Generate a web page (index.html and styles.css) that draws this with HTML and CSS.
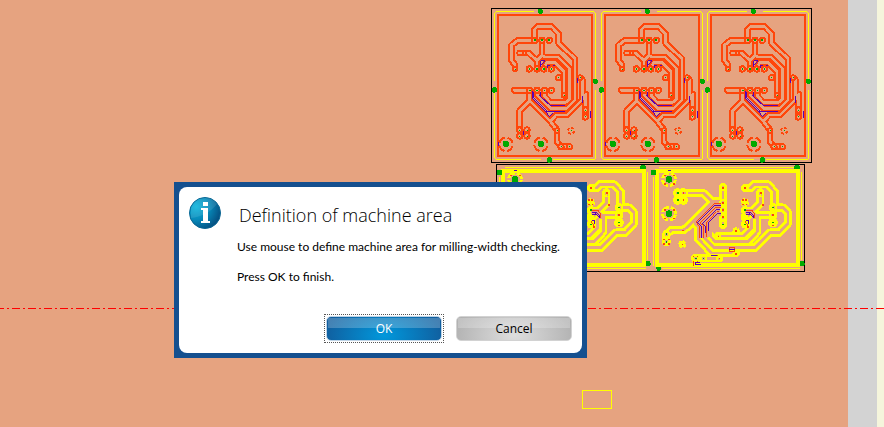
FILE: index.html
```
<!DOCTYPE html>
<html lang="en">
<head>
<meta charset="utf-8">
<title>Definition of machine area</title>
<link rel="stylesheet" href="styles.css">
</head>
<body>
<main class="workspace">
  <div class="bed"></div>
  <div class="rail"></div>
  <div class="edge"></div>
  <svg class="layout" width="884" height="427" aria-hidden="true" shape-rendering="crispEdges">
    <defs>
      <g id="red-traces">
        <path d="M84 207V195L73 180V136L91 122H143V88L151 80H194L215 102V130L264 176V300L238 326H192L150 284V271"/>
        <path d="M165 121V165L172 171H213L247 205V298L236 307H190L172 288V271"/>
        <path d="M98 159H125L150 182V207M165 165L150 182"/>
        <path d="M231 286V215L205 188H178L170 207"/>
        <path d="M82 271H128V302L98 332V390M128 302L190 364L210 390V425L222 440H244"/>
        <path d="M192 362L207 345H240L286 299V240L279 233M296 283V350"/>
      </g>
      <g id="red-pads">
        <circle cx="143" cy="121" r="8"/><circle cx="165" cy="121" r="8"/><circle cx="187" cy="121" r="8"/>
        <circle cx="112" cy="159" r="5"/><circle cx="84" cy="207" r="7"/>
        <circle cx="127" cy="207" r="8"/><circle cx="150" cy="207" r="8"/><circle cx="170" cy="207" r="8"/><circle cx="193" cy="207" r="8"/>
        <circle cx="128" cy="271" r="8"/><circle cx="150" cy="271" r="8"/><circle cx="172" cy="271" r="8"/><circle cx="193" cy="271" r="8"/>
        <circle cx="215" cy="233" r="8"/><circle cx="279" cy="233" r="7"/><circle cx="231" cy="286" r="7"/>
        <circle cx="295" cy="330" r="8"/><circle cx="295" cy="351" r="8"/>
        <circle cx="98" cy="390" r="8"/><circle cx="120" cy="390" r="8"/><circle cx="98" cy="408" r="8"/><circle cx="120" cy="408" r="8"/>
        <circle cx="210" cy="392" r="7"/><circle cx="222" cy="440" r="8"/><circle cx="247" cy="440" r="8"/>
      </g>
      <g id="red-board">
        <path class="thin" d="M140 35H28L23 40V243M23 278V474L28 479H163M197 479H321L326 474V270M326 236V40L321 35H190"/>
        <rect class="red-line" x="33" y="45" width="282" height="423"/>
        <use href="#red-traces" class="red-outer"/>
        <use href="#red-traces" class="red-inner"/>
        <use href="#red-pads" class="red-pad"/>
        <g class="red-ring">
          <circle cx="57" cy="433" r="20" stroke-dasharray="24 7.4" stroke-dashoffset="-4"/>
          <circle cx="162" cy="433" r="20" stroke-dasharray="24 7.4" stroke-dashoffset="-4"/>
          <circle cx="252" cy="392" r="9" stroke-dasharray="9 5"/>
        </g>
        <path class="purple" d="M161 200V182H174M163 196L172 184M181 203V197H190M197 197H205M137 274V297L181 341M141 276V294L184 337M161 276V290L190 317H235M157 285L183 310M178 335H235M180 342L187 350L199 338M271 235V250M286 289V308M311 333V355M109 394V405M36 427V439"/>
        <g class="green">
          <circle cx="160" cy="34" r="8"/><circle cx="325" cy="244" r="8"/><circle cx="22" cy="270" r="8"/><circle cx="187" cy="480" r="8"/>
          <circle cx="57" cy="432" r="10"/><circle cx="162" cy="432" r="10"/>
          <path d="M141 118h6v6h-6zM162 118h6v6h-6zM184 118h6v6h-6zM125 205h5v5h-5zM148 205h5v5h-5zM168 205h5v5h-5zM191 205h5v5h-5zM126 269h5v5h-5zM148 269h5v5h-5zM170 269h5v5h-5zM191 269h5v5h-5zM83 206h3v3h-3zM214 232h3v3h-3zM278 232h3v3h-3zM230 285h3v3h-3zM294 329h3v3h-3zM294 349h3v3h-3zM97 389h3v3h-3zM119 389h3v3h-3zM97 407h3v3h-3zM119 407h3v3h-3zM209 391h3v3h-3zM221 438h4v4h-4zM245 438h4v4h-4zM251 391h3v3h-3z"/>
        </g>
      </g>
      <g id="yellow-traces">
        <path d="M315 84H332L342 73H383L404 95V143H430L444 158V190L418 218H390L345 263H222L186 227V205"/>
        <path d="M399 165H352V215L325 245H225L203 218V200"/>
        <path d="M361 97V130L335 154H315"/>
        <path d="M235 228H310L335 205V178"/>
        <path d="M249 82V193"/>
        <path d="M113 99H190L215 124H249M215 128L140 203L130 210H95L79 223V245"/>
        <path d="M165 190L174 200V236L215 279H288"/>
        <path d="M165 295H238"/>
      </g>
      <g id="yellow-pads">
        <circle cx="113" cy="99" r="11"/><circle cx="130" cy="99" r="11"/><circle cx="113" cy="120" r="11"/><circle cx="130" cy="120" r="11"/>
        <circle cx="249" cy="82" r="8"/><circle cx="249" cy="128" r="9"/><circle cx="249" cy="150" r="9"/><circle cx="249" cy="172" r="9"/><circle cx="249" cy="193" r="10"/>
        <circle cx="315" cy="84" r="8"/><circle cx="315" cy="127" r="9" stroke-dasharray="5 4"/><circle cx="315" cy="150" r="8"/><circle cx="313" cy="172" r="8"/><circle cx="315" cy="193" r="9"/>
        <circle cx="361" cy="99" r="8" stroke-dasharray="6 3"/><circle cx="399" cy="143" r="10"/><circle cx="399" cy="165" r="10"/><circle cx="399" cy="188" r="11"/>
        <circle cx="79" cy="223" r="9"/><circle cx="79" cy="245" r="10"/><circle cx="127" cy="253" r="9" stroke-dasharray="10 4"/>
        <circle cx="288" cy="213" r="8" stroke-dasharray="10 4"/><circle cx="235" cy="228" r="6"/><circle cx="288" cy="281" r="7"/>
        <circle cx="166" cy="295" r="9" stroke-dasharray="5 3"/><circle cx="190" cy="295" r="9"/><circle cx="238" cy="296" r="7"/>
      </g>
      <g id="yellow-board">
        <path class="thin" d="M58 22H465M40 50V319M484 36V300M65 325H479"/>
        <rect class="yellow-frame" x="51" y="33" width="424" height="282"/>
        <use href="#yellow-traces" class="yellow-outer"/>
        <use href="#yellow-pads" class="yellow-pad-fill"/>
        <use href="#yellow-traces" class="yellow-inner"/>
        <use href="#yellow-pads" class="yellow-pad"/>
        <g class="yellow-ring">
          <circle cx="87" cy="58" r="19" stroke-dasharray="24 5.8" stroke-dashoffset="-3"/>
          <circle cx="87" cy="161" r="19" stroke-dasharray="24 5.8" stroke-dashoffset="-3"/>
        </g>
        <path class="bed-line" d="M244 136H224L172 187L184 198V235M240 150H228L196 184V235M242 162H230L208 188V232M316 154H334L342 164V178"/>
        <path class="red-thin" d="M243 132H221L168 187L179 199V235M243 143H226L180 189L190 196V235M238 155H230L200 187V230M316 151H336L344 162V174M268 264H284V276H268ZM214 286H234M315 184L326 200M162 306V317"/>
        <path class="purple" d="M243 138H223L173 188L185 200V233M240 149H230L187 191L196 198V220M242 161H231L206 187V212M318 157H332L340 165V174M325 158L337 170M318 165H330M319 183H326V192M268 270H284M214 287H232M183 313H166V307H180M84 32H92"/>
        <path class="red-dots" d="M110 96h5v5h-5zM128 96h5v5h-5zM110 117h5v5h-5zM128 117h5v5h-5zM246 82h6v5h-6zM247 127h5v5h-5zM247 148h5v5h-5zM247 169h5v5h-5zM312 82h5v5h-5zM307 118h4v4h-4zM316 118h4v4h-4zM307 132h4v4h-4zM317 132h4v4h-4zM360 96h5v5h-5zM367 133h4v4h-4zM397 162h5v5h-5zM397 195h4v4h-4zM127 209h4v4h-4zM70 236h4v4h-4zM85 236h4v4h-4zM70 250h4v4h-4zM85 250h4v4h-4zM126 251h4v4h-4zM286 211h4v4h-4zM234 227h4v4h-4zM286 280h4v4h-4zM236 294h4v4h-4zM158 288h4v4h-4zM170 288h4v4h-4zM158 302h4v4h-4zM170 302h4v4h-4zM322 198h5v5h-5zM73 44h4v4h-4zM100 44h4v4h-4zM73 70h4v4h-4zM100 70h4v4h-4zM73 148h4v4h-4zM100 148h4v4h-4zM73 174h4v4h-4zM100 174h4v4h-4z"/>
        <g class="green">
          <path d="M33 30h14v14h-14zM464 15h14l2 12h-18zM481 303h11l3 12-4 3h-11zM48 321h15v8l-4 4h-8z"/>
          <circle cx="87" cy="58" r="10"/><circle cx="87" cy="161" r="10"/>
          <path d="M111 97h5v5h-5zM111 118h5v5h-5zM247 191h5v5h-5zM397 140h5v5h-5zM397 185h5v5h-5zM77 220h5v5h-5zM77 243h5v5h-5zM312 148h5v5h-5zM312 191h5v5h-5zM188 293h5v5h-5zM166 293h4v4h-4z"/>
        </g>
      </g>
    </defs>
    <path class="panel" d="M491.500 8.500H811.500V162.500H491.500ZM496.500 164.500H804.500V271.500H496.500Z"/>
    <g id="lower-boards">
      <use href="#yellow-board" transform="translate(486 160) scale(.33333)"/>
      <use href="#yellow-board" transform="translate(640 160) scale(.33333)"/>
    </g>
    <g id="upper-boards">
      <use href="#red-board" transform="translate(487 0) scale(.33333)"/>
      <use href="#red-board" transform="translate(594 0) scale(.33333)"/>
      <use href="#red-board" transform="translate(700 0) scale(.33333)"/>
    </g>
    <path class="axis" d="M0 308.500H884"/>
    <rect class="marker" x="582.500" y="390.500" width="29" height="18"/>
  </svg>

  <section class="dialog" role="dialog" aria-labelledby="dialog-title">
    <svg class="info" viewBox="0 0 32 32" aria-hidden="true">
      <defs>
        <radialGradient id="ball" cx=".22" cy=".3" r=".85">
          <stop offset="0" stop-color="#0cb4dc"/><stop offset=".5" stop-color="#0788b8"/><stop offset="1" stop-color="#054a7c"/>
        </radialGradient>
      </defs>
      <circle cx="16" cy="16" r="15.500" fill="url(#ball)" stroke="#0a6794"/>
      <path d="M2 21C12 20 22 15 28 7A15 15 0 0 0 2 11Z" fill="#fff" opacity=".1"/>
      <path d="M14 5h5v4h-5zM12 11h7v13h2v2h-9v-2h2v-11h-2z" fill="#fff"/>
    </svg>
    <div class="content">
      <h1 class="title" id="dialog-title">Definition of machine area</h1>
      <p class="message">Use mouse to define machine area for milling-width checking.</p>
      <p class="message">Press OK to finish.</p>
    </div>
    <div class="actions">
      <button class="button primary" type="button">OK</button>
      <button class="button" type="button">Cancel</button>
    </div>
  </section>
</main>
</body>
</html>
```
FILE: styles.css
```
* { box-sizing: border-box; }
body { margin: 0; font-family: "Open Sans", "Noto Sans", sans-serif; font-size: 12px; color: #000; }
.workspace { position: relative; display: flex; min-height: 100vh; overflow: hidden; }
.bed { flex: 1; background: #e6a380; }
.rail { width: 29px; background: #d3d3d3; }
.edge { width: 7px; background: #f5f5dc; }
.layout { position: absolute; left: 0; top: 0; fill: none; }

.panel { stroke: #000; }
.axis { stroke: #f00; stroke-dasharray: 8 3 2 3; stroke-dashoffset: 4; }
.marker, .thin { stroke: #ff0; }
.thin { stroke-width: 3; }
.red-line { stroke: #ff460a; stroke-width: 6; }
.red-outer { stroke: #ff460a; stroke-width: 20; stroke-linejoin: round; stroke-linecap: round; }
.red-inner { stroke: #e6a380; stroke-width: 8; stroke-linejoin: round; stroke-linecap: round; }
.red-pad { stroke: #ff460a; stroke-width: 6; fill: #e6a380; }
.red-ring { stroke: #ff460a; stroke-width: 6; }
.purple { stroke: #5a00b4; stroke-width: 3; }
.green { fill: #00aa00; }
.yellow-frame { stroke: #ff0; stroke-width: 12; }
.yellow-outer { stroke: #ff0; stroke-width: 25; stroke-linejoin: round; stroke-linecap: round; }
.yellow-inner { stroke: #e6a380; stroke-width: 8; stroke-linejoin: round; stroke-linecap: round; }
.yellow-pad-fill { fill: #ff0; }
.yellow-pad { stroke: #ff0; stroke-width: 7; }
.yellow-ring { stroke: #ff0; stroke-width: 9; }
.bed-line { stroke: #e6a380; stroke-width: 14; }
.red-thin { stroke: #ff460a; stroke-width: 3; }
.red-dots { fill: #ff460a; }

.dialog {
  position: absolute; left: 174px; top: 182px;
  display: grid; grid-template-columns: 32px minmax(0, 1fr); column-gap: 16px;
  width: 413px; min-height: 176px; padding: 15px 15px 17px;
  background: #15508f;
  isolation: isolate;
}
.dialog::before { content: ""; position: absolute; inset: 5px; z-index: -1; border-radius: 8px; background: #fff; }
.info { width: 32px; height: 32px; }
.title { margin: 4px 0 10px 2px; font-size: 18px; line-height: 28px; font-weight: 300; white-space: nowrap; }
.message { margin: 0 0 14px; font-family: Lato, "Open Sans", sans-serif; line-height: 16px; white-space: nowrap; }
.actions { grid-column: 1 / -1; display: flex; align-self: end; justify-content: flex-end; gap: 14px; }
.button {
  position: relative;
  width: 116px; height: 25px; padding: 0;
  border: 1px solid #d2d2d2; border-radius: 5px;
  font: inherit; color: #000;
  background:
    linear-gradient(rgba(255,255,255,.22), rgba(255,255,255,.22)) 1px 1px / 112px 10px no-repeat,
    radial-gradient(ellipse 65% 180% at 50% 80%, #dedede, #a8a8a8);
}
.primary {
  color: #fff; border-color: #bdd3e6;
  background:
    linear-gradient(rgba(255,255,255,.22), rgba(255,255,255,.22)) 1px 1px / 112px 10px no-repeat,
    radial-gradient(ellipse 65% 180% at 50% 80%, #0098dc, #15508f);
}
.primary::after { content: ""; position: absolute; inset: -3px; border: 1px dotted #555; }
```
